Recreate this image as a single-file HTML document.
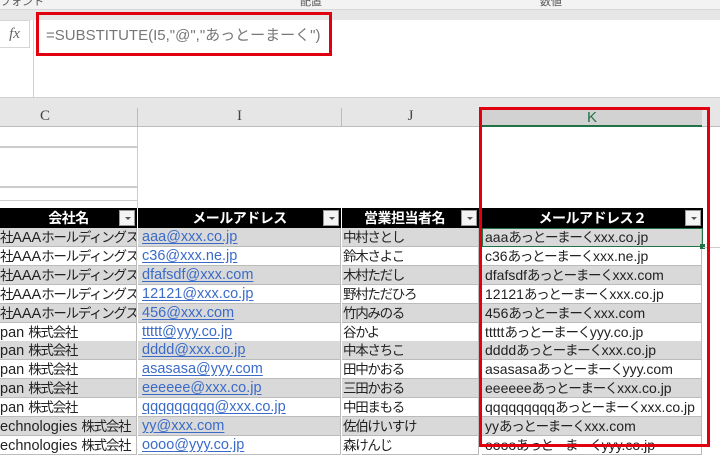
<!DOCTYPE html>
<html><head><meta charset="utf-8"><style>
*{margin:0;padding:0;box-sizing:border-box}
body{width:720px;height:447px;overflow:hidden;background:#fff;position:relative;font-family:"Liberation Sans","Noto Sans CJK JP",sans-serif}
.a{position:absolute}
.cell{position:absolute;height:19px;line-height:19px;font-size:14.5px;white-space:nowrap;overflow:hidden;color:#222;border-bottom:1px solid #bbb}
.g{background:#d9d9d9}.w{background:#fff}
.j{font-size:13.5px;letter-spacing:-1.3px}
.k{font-size:14px}
.lnk{color:#3a6bc9;text-decoration:underline;text-underline-offset:2px}
.hd{position:absolute;top:208px;height:20px;background:#000;color:#fff;font-weight:bold;font-size:14px;line-height:20px;text-align:center;letter-spacing:-0.5px}
.dd{position:absolute;top:2px;right:2px;width:16px;height:16px;background:#f4f4f4;border:1px solid #999}
.dd:after{content:"";position:absolute;left:5px;top:6px;border-left:3px solid transparent;border-right:3px solid transparent;border-top:3px solid #555}
</style></head><body>
<div class="a" style="left:0;top:0;width:720px;height:10px;background:#f3f3f3;border-bottom:1px solid #d8d8d8;font-size:11px;color:#555;line-height:8px;overflow:hidden">
<span class="a" style="left:0;top:-2px">フォント</span><span class="a" style="left:300px;top:-2px">配置</span><span class="a" style="left:540px;top:-2px">数値</span></div>
<div class="a" style="left:0;top:10px;width:720px;height:10px;background:#e6e6e6"></div>
<div class="a" style="left:33px;top:20px;width:687px;height:77px;background:#fff;border-left:1px solid #d0d0d0"></div>
<div class="a" style="left:0;top:20px;width:30px;height:28px;background:#fff;border:1px solid #d6d6d6;border-left:none;font-family:'Liberation Serif',serif;font-style:italic;font-size:15px;color:#666;text-align:center;line-height:26px">fx</div>
<div class="a" style="left:36px;top:12px;width:296px;height:44px;border:3px solid #e00010"></div>
<div class="a" style="left:46px;top:24px;font-size:15px;color:#777">=SUBSTITUTE(I5,"@","あっとーまーく")</div>
<div class="a" style="left:0;top:97px;width:720px;height:30px;background:#e6e6e6;border-top:1px solid #d0d0d0;border-bottom:1px solid #bdbdbd"></div>
<div class="a" style="left:0;top:108px;width:90px;text-align:center;font-family:'Liberation Serif',serif;font-size:15px;color:#444">C</div>
<div class="a" style="left:137px;top:108px;width:1px;height:19px;background:#bbb"></div>
<div class="a" style="left:138px;top:108px;width:203px;text-align:center;font-family:'Liberation Serif',serif;font-size:15px;color:#444">I</div>
<div class="a" style="left:341px;top:108px;width:1px;height:19px;background:#bbb"></div>
<div class="a" style="left:342px;top:108px;width:137px;text-align:center;font-family:'Liberation Serif',serif;font-size:15px;color:#444">J</div>
<div class="a" style="left:482px;top:110px;width:220px;height:17px;background:#d2d2d2;border-bottom:2px solid #217346;text-align:center;font-size:15px;color:#217346;line-height:16px">K</div>
<div class="a" style="left:0;top:127px;width:137px;height:81px;background:#fff"></div>
<div class="a" style="left:0;top:146px;width:137px;height:2px;background:#ccc"></div>
<div class="a" style="left:0;top:186px;width:137px;height:2px;background:#ccc"></div>
<div class="a" style="left:0;top:200px;width:137px;height:1px;background:#ccc"></div>
<div class="a" style="left:137px;top:127px;width:1px;height:81px;background:#ccc"></div>
<div class="hd" style="left:0;width:137px">会社名<div class="dd"></div></div>
<div class="hd" style="left:138px;width:203px">メールアドレス<div class="dd"></div></div>
<div class="hd" style="left:342px;width:137px;padding-right:12px">営業担当者名<div class="dd"></div></div>
<div class="hd" style="left:482px;width:221px">メールアドレス２<div class="dd"></div></div>
<div id="rows"></div>
<script>
var d=[["社AAAホールディングス","aaa@xxx.co.jp","中村さとし","aaaあっとーまーくxxx.co.jp"],
["社AAAホールディングス","c36@xxx.ne.jp","鈴木さよこ","c36あっとーまーくxxx.ne.jp"],
["社AAAホールディングス","dfafsdf@xxx.com","木村ただし","dfafsdfあっとーまーくxxx.com"],
["社AAAホールディングス","12121@xxx.co.jp","野村ただひろ","12121あっとーまーくxxx.co.jp"],
["社AAAホールディングス","456@xxx.com","竹内みのる","456あっとーまーくxxx.com"],
["pan 株式会社","ttttt@yyy.co.jp","谷かよ","tttttあっとーまーくyyy.co.jp"],
["pan 株式会社","dddd@xxx.co.jp","中本さちこ","ddddあっとーまーくxxx.co.jp"],
["pan 株式会社","asasasa@yyy.com","田中かおる","asasasaあっとーまーくyyy.com"],
["pan 株式会社","eeeeee@xxx.co.jp","三田かおる","eeeeeeあっとーまーくxxx.co.jp"],
["pan 株式会社","qqqqqqqqq@xxx.co.jp","中田まもる","qqqqqqqqqあっとーまーくxxx.co.jp"],
["echnologies 株式会社","yy@xxx.com","佐伯けいすけ","yyあっとーまーくxxx.com"],
["echnologies 株式会社","oooo@yyy.co.jp","森けんじ","ooooあっとーまーくyyy.co.jp"]];
function jw(s){return s.replace(/([^\x00-\x7f]+)/g,'<span class="j">$1</span>');}
var h="",L=[[0,137,0],[138,203,4],[342,137,1],[482,220,3]];
for(var i=0;i<d.length;i++){var y=228+Math.round(i*18.9),c=i%2?"w":"g";
for(var j=0;j<4;j++){h+='<div class="cell '+c+(j==3?' k':'')+'" style="top:'+y+'px;left:'+L[j][0]+'px;width:'+L[j][1]+'px;padding-left:'+L[j][2]+'px;border-right:1px solid #bbb">'+(j==1?'<span class="lnk">'+d[i][j]+'</span>':jw(d[i][j]))+'</div>';}}
document.getElementById("rows").innerHTML=h;
</script>
<div class="a" style="left:482px;top:228px;width:221px;height:19px;border:1px solid #217346"></div>
<div class="a" style="left:700px;top:244px;width:5px;height:5px;background:#217346"></div>
<div class="a" style="left:703px;top:247px;width:17px;height:1px;background:#ccc"></div>
<div class="a" style="left:479px;top:107px;width:231px;height:340px;border:3px solid #e00010"></div>
</body></html>
